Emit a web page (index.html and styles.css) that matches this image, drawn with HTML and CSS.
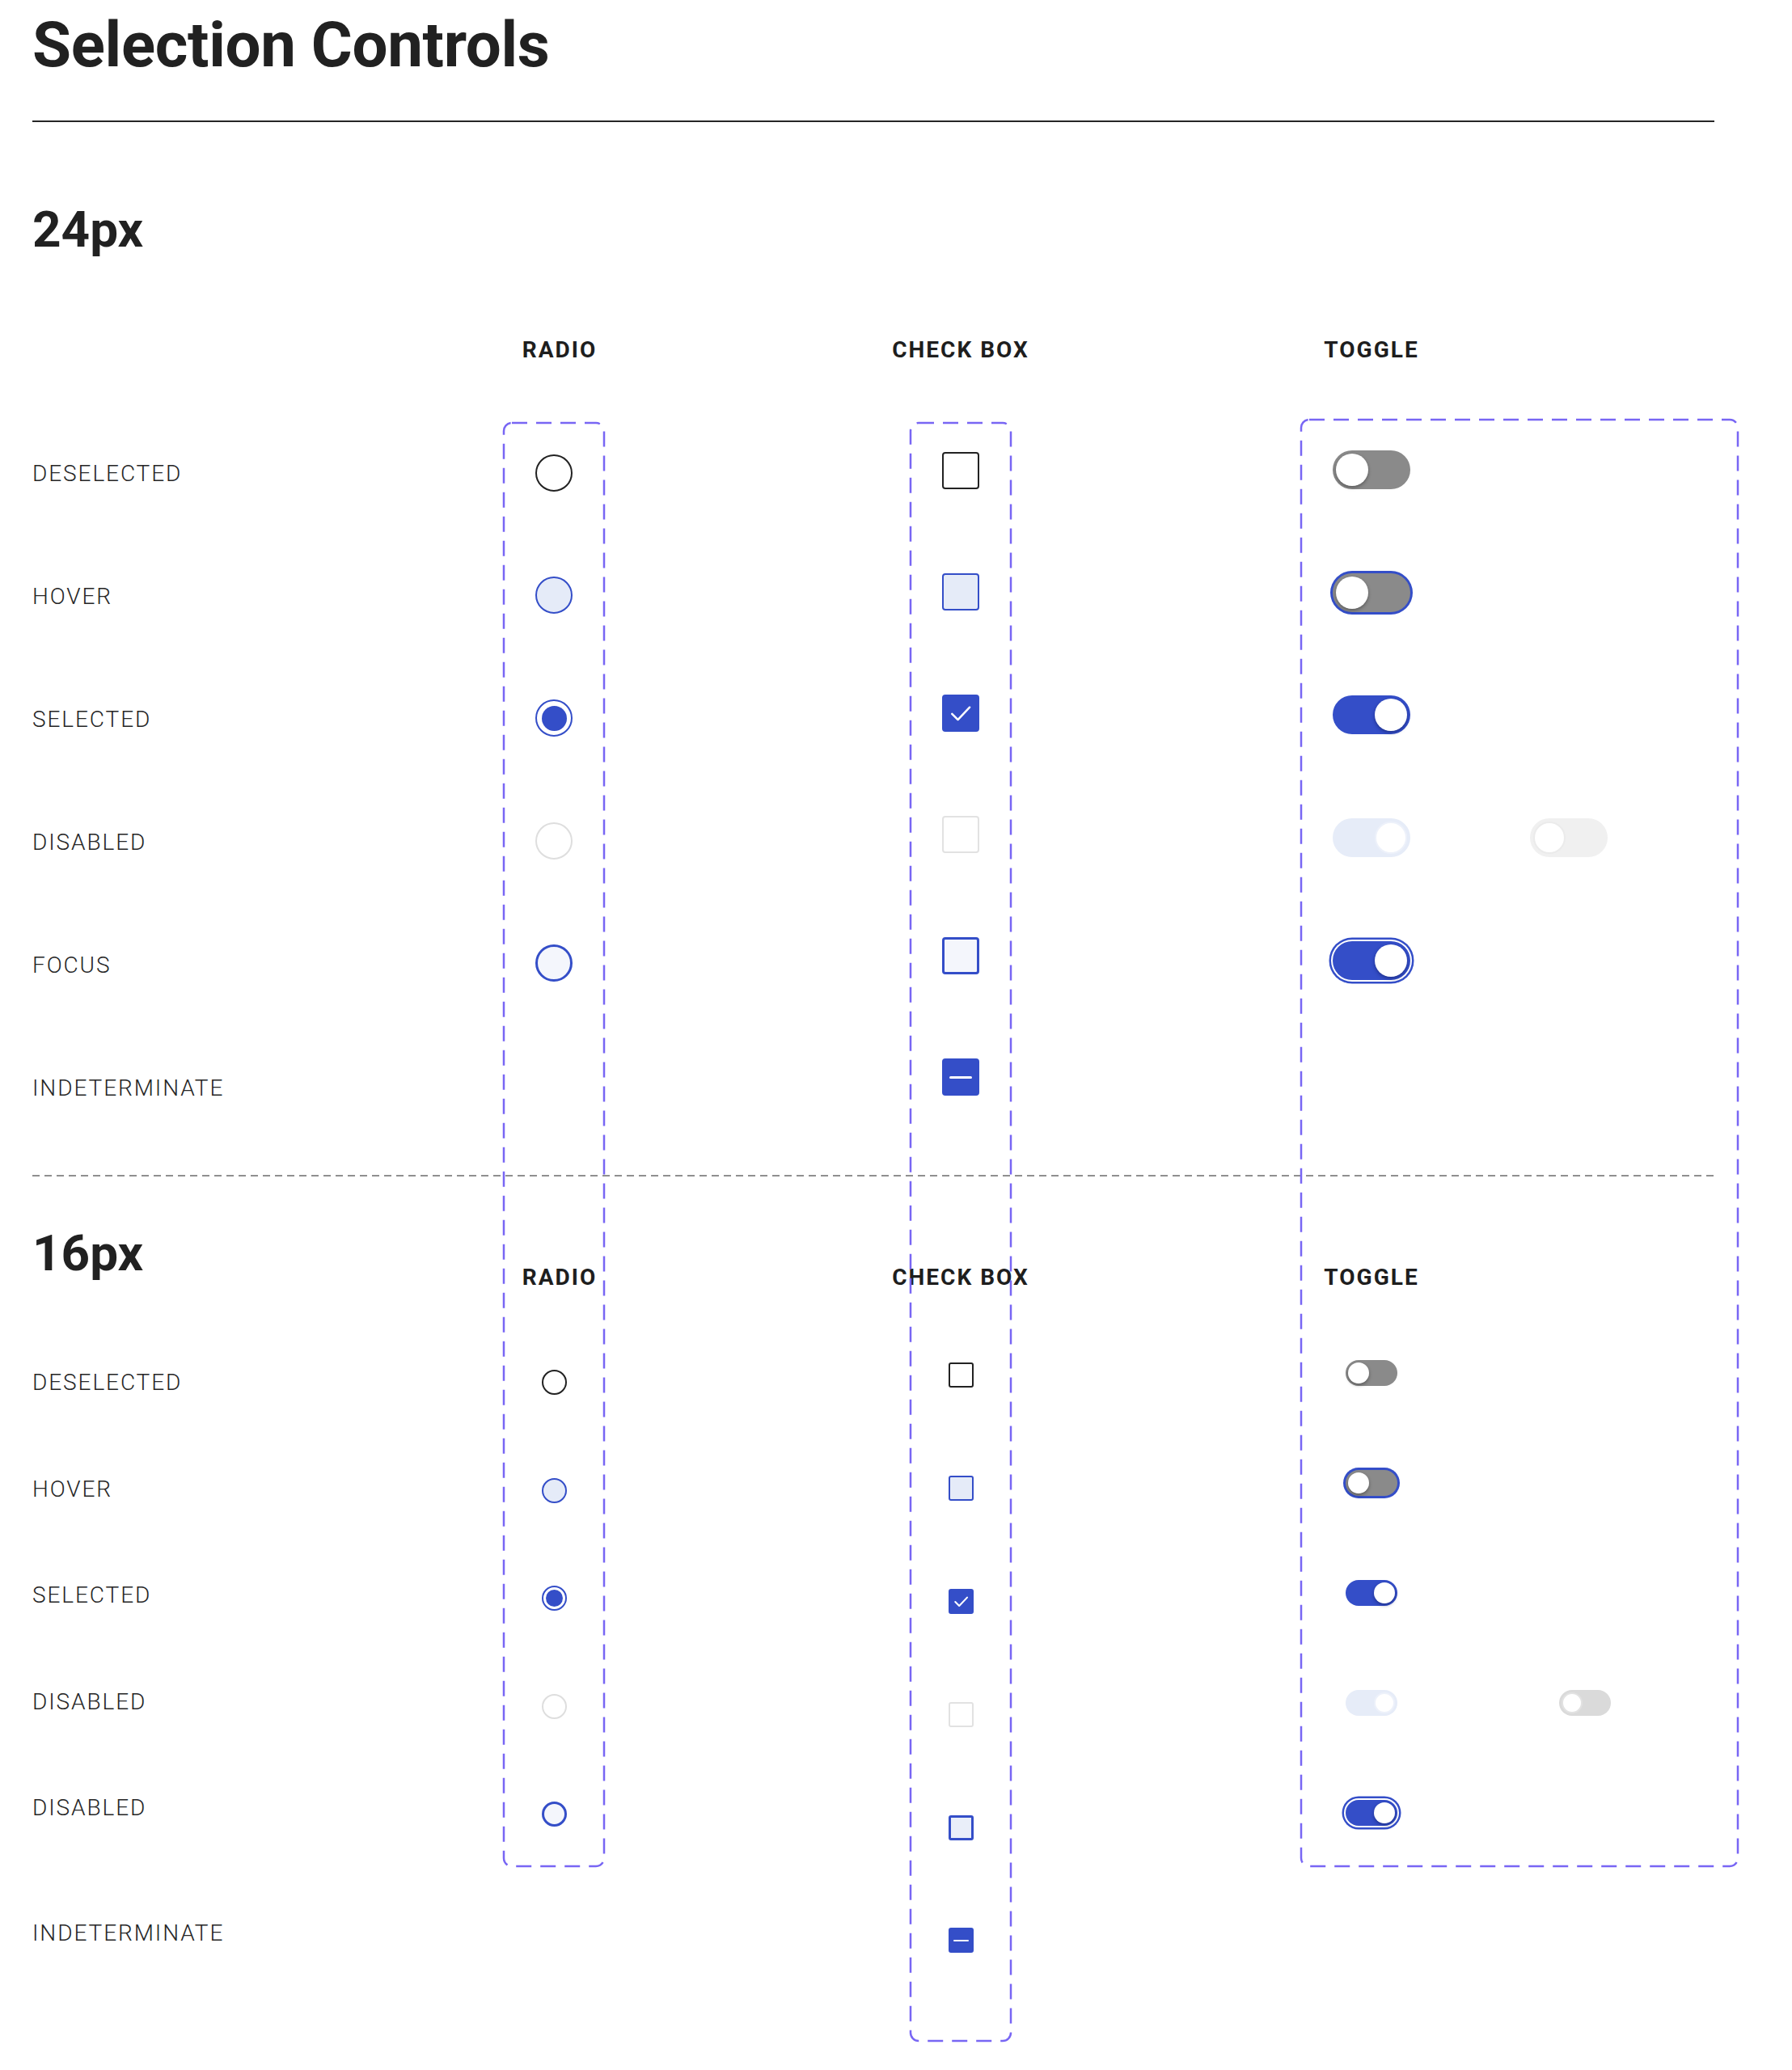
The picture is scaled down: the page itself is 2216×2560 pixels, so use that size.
FILE: index.html
```html
<!DOCTYPE html>
<html lang="en">
<head>
    <meta charset="UTF-8">
    <title>Selection Controls</title>
    <link rel="stylesheet" href="styles.css">
</head>
<body>
<div class="page">
    <h1 class="title">Selection Controls</h1>
    <div class="rule"></div>

    <div class="board">
        <!-- 24px -->
        <h2 class="size-title s24-title">24px</h2>
        <div class="col-head head-1 head-radio">RADIO</div>
        <div class="col-head head-1 head-check">CHECK BOX</div>
        <div class="col-head head-1 head-toggle">TOGGLE</div>

        <div class="list labels labels-1">
            <div class="cell">DESELECTED</div>
            <div class="cell">HOVER</div>
            <div class="cell">SELECTED</div>
            <div class="cell">DISABLED</div>
            <div class="cell">FOCUS</div>
            <div class="cell">INDETERMINATE</div>
        </div>

        <div class="list radios radios-1 lg">
            <div class="cell"><span class="radio"></span></div>
            <div class="cell"><span class="radio hover"></span></div>
            <div class="cell"><span class="radio selected"></span></div>
            <div class="cell"><span class="radio disabled"></span></div>
            <div class="cell"><span class="radio focus"></span></div>
        </div>

        <div class="list checks checks-1 lg">
            <div class="cell"><span class="check"></span></div>
            <div class="cell"><span class="check hover"></span></div>
            <div class="cell"><span class="check selected"><svg viewBox="0 0 24 24"><path d="M6.4 12.4l3.8 3.8 7.6-8"/></svg></span></div>
            <div class="cell"><span class="check disabled"></span></div>
            <div class="cell"><span class="check focus"></span></div>
            <div class="cell"><span class="check mixed"><span class="dash"></span></span></div>
        </div>

        <div class="list toggles toggles-1 lg">
            <div class="cell"><div class="slot"><span class="toggle"><span class="knob"></span></span></div></div>
            <div class="cell"><div class="slot"><span class="toggle hover"><span class="knob"></span></span></div></div>
            <div class="cell"><div class="slot"><span class="toggle on"><span class="knob"></span></span></div></div>
            <div class="cell">
                <div class="slot"><span class="toggle on disabled"><span class="knob"></span></span></div>
                <div class="slot"><span class="toggle disabled"><span class="knob"></span></span></div>
            </div>
            <div class="cell"><div class="slot"><span class="toggle on focus"><span class="knob"></span></span></div></div>
        </div>

        <div class="divider"></div>

        <!-- 16px -->
        <h2 class="size-title s16-title">16px</h2>
        <div class="col-head head-2 head-radio">RADIO</div>
        <div class="col-head head-2 head-check">CHECK BOX</div>
        <div class="col-head head-2 head-toggle">TOGGLE</div>

        <div class="list labels labels-2">
            <div class="cell">DESELECTED</div>
            <div class="cell">HOVER</div>
            <div class="cell">SELECTED</div>
            <div class="cell">DISABLED</div>
            <div class="cell">DISABLED</div>
            <div class="cell last">INDETERMINATE</div>
        </div>

        <div class="list radios radios-2 sm">
            <div class="cell"><span class="radio"></span></div>
            <div class="cell"><span class="radio hover"></span></div>
            <div class="cell"><span class="radio selected"></span></div>
            <div class="cell"><span class="radio disabled"></span></div>
            <div class="cell"><span class="radio focus"></span></div>
        </div>

        <div class="list checks checks-2 sm">
            <div class="cell"><span class="check"></span></div>
            <div class="cell"><span class="check hover"></span></div>
            <div class="cell"><span class="check selected"><svg viewBox="0 0 24 24"><path d="M6.4 12.4l3.8 3.8 7.6-8"/></svg></span></div>
            <div class="cell"><span class="check disabled"></span></div>
            <div class="cell"><span class="check focus"></span></div>
            <div class="cell"><span class="check mixed"><span class="dash"></span></span></div>
        </div>

        <div class="list toggles toggles-2 sm">
            <div class="cell"><div class="slot"><span class="toggle"><span class="knob"></span></span></div></div>
            <div class="cell"><div class="slot"><span class="toggle hover"><span class="knob"></span></span></div></div>
            <div class="cell"><div class="slot"><span class="toggle on"><span class="knob"></span></span></div></div>
            <div class="cell">
                <div class="slot"><span class="toggle on disabled"><span class="knob"></span></span></div>
                <div class="slot"><span class="toggle disabled"><span class="knob"></span></span></div>
            </div>
            <div class="cell"><div class="slot"><span class="toggle on focus"><span class="knob"></span></span></div></div>
        </div>

        <!-- dashed frames around each control column -->
        <div class="frame frame-radio"><svg><rect/></svg></div>
        <div class="frame frame-check"><svg><rect/></svg></div>
        <div class="frame frame-toggle"><svg><rect/></svg></div>
    </div>
</div>
</body>
</html>
```

FILE: styles.css
```css
body {
    margin: 0;
    background-color: #fff;
    font-family: Roboto, "Liberation Sans", Arial, sans-serif;
    color: #222;
}
.page {
    padding: 11px 0 0 40px;
}
.title {
    margin: 0;
    font-size: 78px;
    line-height: 90px;
    font-weight: 700;
    letter-spacing: -0.3px;
    color: #212121;
}
.rule {
    width: 2080px;
    margin-top: 48px;
    border-top: 2px solid #262626;
}

/* main grid: labels | radio | gap | check box | gap | toggle */
.board {
    display: grid;
    margin-top: 59px;
    grid-template-columns: 582px 126px 377px 126px 357px 542px;
    grid-template-rows: 147px 152px 912px 66px 143px 930px;
}
.size-title {
    grid-column: 1;
    margin: 0;
    font-size: 62px;
    line-height: 70px;
    font-weight: 700;
    color: #212121;
}
.s24-title {
    grid-row: 1;
    align-self: center;
}
.s16-title {
    grid-row: 5;
    align-self: start;
    margin-top: 28px;
}
.col-head {
    display: flex;
    justify-content: center;
    white-space: nowrap;
    font-size: 28px;
    line-height: 34px;
    font-weight: 700;
    letter-spacing: 2px;
    color: #1e1e1e;
}
.head-1 {
    grid-row: 2;
    align-self: center;
}
.head-2 {
    grid-row: 5;
    align-self: start;
    margin-top: 76px;
}
.head-radio {
    grid-column: 2;
    padding-left: 14px;
}
.head-check {
    grid-column: 4;
}
.head-toggle {
    grid-column: 6;
    width: 96px;
    margin-left: 40px;
}

.list {
    display: flex;
    flex-direction: column;
}
.cell {
    display: flex;
    align-items: center;
    justify-content: center;
    flex-shrink: 0;
}
.labels {
    grid-column: 1;
}
.labels .cell {
    justify-content: flex-start;
    font-size: 28px;
    font-weight: 300;
    letter-spacing: 1.9px;
    color: #262626;
}
.labels-1 { grid-row: 3; }
.labels-1 .cell { height: 152px; }
.labels-2 { grid-row: 6; padding-top: 14px; }
.labels-2 .cell { height: 131.5px; }
.labels-2 .cell.last { margin-top: 23.5px; }

.radios { grid-column: 2; }
.radios-1 { grid-row: 3; }
.radios-1 .cell { height: 151.6px; }
.radios-2 { grid-row: 6; padding-top: 13px; }
.radios-2 .cell { height: 133.5px; }

.checks { grid-column: 4; }
.checks-1 { grid-row: 3; margin-top: -2px; }
.checks-1 .cell { height: 150px; }
.checks-2 { grid-row: 6; padding-top: 1px; }
.checks-2 .cell { height: 139.8px; }

.toggles {
    grid-column: 6;
    padding-left: 40px;
}
.toggles .cell {
    justify-content: flex-start;
}
.toggles-1 { grid-row: 3; margin-top: -4px; }
.toggles-1 .cell { height: 151.75px; gap: 148px; }
.toggles-2 { grid-row: 6; }
.toggles-2 .cell { height: 136px; gap: 168px; }
.slot {
    width: 96px;
    display: flex;
    justify-content: center;
}

.divider {
    grid-column: 1 / -1;
    grid-row: 4;
    align-self: center;
    height: 2px;
    margin-right: 30px;
    background: repeating-linear-gradient(90deg, #8f8f8f 0 9px, transparent 9px 15px);
}

/* dashed purple frames */
.frame {
    grid-row: 3 / 7;
    margin-top: 13px;
    margin-bottom: 251px;
}
.frame-radio { grid-column: 2; }
.frame-check { grid-column: 4; margin-bottom: 35px; }
.frame-toggle { grid-column: 6; margin-top: 9px; }
.frame svg {
    display: block;
    width: 100%;
    height: 100%;
    overflow: visible;
}
.frame rect {
    x: 1px;
    y: 1px;
    width: calc(100% - 2px);
    height: calc(100% - 2px);
    rx: 10px;
    fill: none;
    stroke: #7866f4;
    stroke-width: 2.5;
    stroke-dasharray: 19 11;
}

/* radio */
.radio {
    box-sizing: border-box;
    display: block;
    border-radius: 50%;
    border: 2px solid #222;
    background-color: #fff;
}
.lg .radio { width: 46px; height: 46px; }
.sm .radio { width: 31px; height: 31px; }
.radio.hover {
    border-color: #344ec8;
    background-color: #e5ebf8;
}
.radio.selected {
    border-color: #344ec8;
    background-color: #344ec8;
    background-clip: content-box;
}
.lg .radio.selected { padding: 5.5px; }
.sm .radio.selected { padding: 3px; }
.radio.disabled {
    border-color: #dedede;
}
.radio.focus {
    border-color: #344ec8;
    background-color: #f4f6fc;
}
.lg .radio.focus { border-width: 3.5px; }
.sm .radio.focus { border-width: 3px; }

/* check box */
.check {
    box-sizing: border-box;
    display: flex;
    align-items: center;
    justify-content: center;
    border: 2px solid #222;
    border-radius: 4px;
    background-color: #fff;
}
.lg .check { width: 46px; height: 46px; }
.sm .check { width: 31px; height: 31px; border-radius: 3px; }
.check svg {
    flex-shrink: 0;
    fill: none;
    stroke: #fff;
    stroke-width: 1.3;
    stroke-linecap: round;
    stroke-linejoin: round;
}
.lg .check svg { width: 46px; height: 46px; }
.sm .check svg { width: 31px; height: 31px; stroke-width: 1.6; }
.check.hover {
    border-color: #344ec8;
    background-color: #e5ebf8;
}
.check.selected,
.check.mixed {
    border-color: #344ec8;
    background-color: #344ec8;
}
.check.disabled {
    border-color: #e2e2e2;
}
.check.focus {
    border-color: #344ec8;
    background-color: #f4f6fc;
}
.lg .check.focus { border-width: 3.5px; }
.sm .check.focus { border-width: 3px; background-color: #e9eef9; }
.dash {
    background-color: #fff;
    border-radius: 2px;
}
.lg .dash { width: 28px; height: 3px; }
.sm .dash { width: 19px; height: 2.5px; }

/* toggle */
.toggle {
    box-sizing: border-box;
    display: flex;
    background-color: #8a8a8a;
}
.lg .toggle { width: 96px; height: 48px; border-radius: 24px; padding: 4px; }
.sm .toggle { width: 64px; height: 32px; border-radius: 16px; padding: 3px; }
.knob {
    box-sizing: border-box;
    border-radius: 50%;
    background-color: #fff;
    box-shadow: 0 2px 4px rgba(0, 0, 0, 0.35);
}
.lg .knob { width: 40px; height: 40px; }
.sm .knob { width: 26px; height: 26px; }
.toggle.on {
    background-color: #344ec8;
    justify-content: flex-end;
}
.toggle.on .knob {
    box-shadow: 0 2px 4px rgba(10, 20, 80, 0.5);
}
.toggle.hover {
    box-shadow: 0 0 0 3px #344ec8;
}
.toggle.focus {
    box-shadow: 0 0 0 2px #fff, 0 0 0 4.5px #344ec8;
}
.toggle.disabled {
    background-color: #f0f0f0;
}
.toggle.disabled .knob {
    box-shadow: none;
    border: 2px solid #ebebeb;
}
.toggle.disabled.on {
    background-color: #e6ecf8;
}
.toggle.disabled.on .knob {
    border-color: #edf1fa;
}
.sm .toggle.disabled:not(.on) {
    background-color: #dadada;
}
.sm .toggle.disabled:not(.on) .knob {
    border-color: #e2e2e2;
}
```
